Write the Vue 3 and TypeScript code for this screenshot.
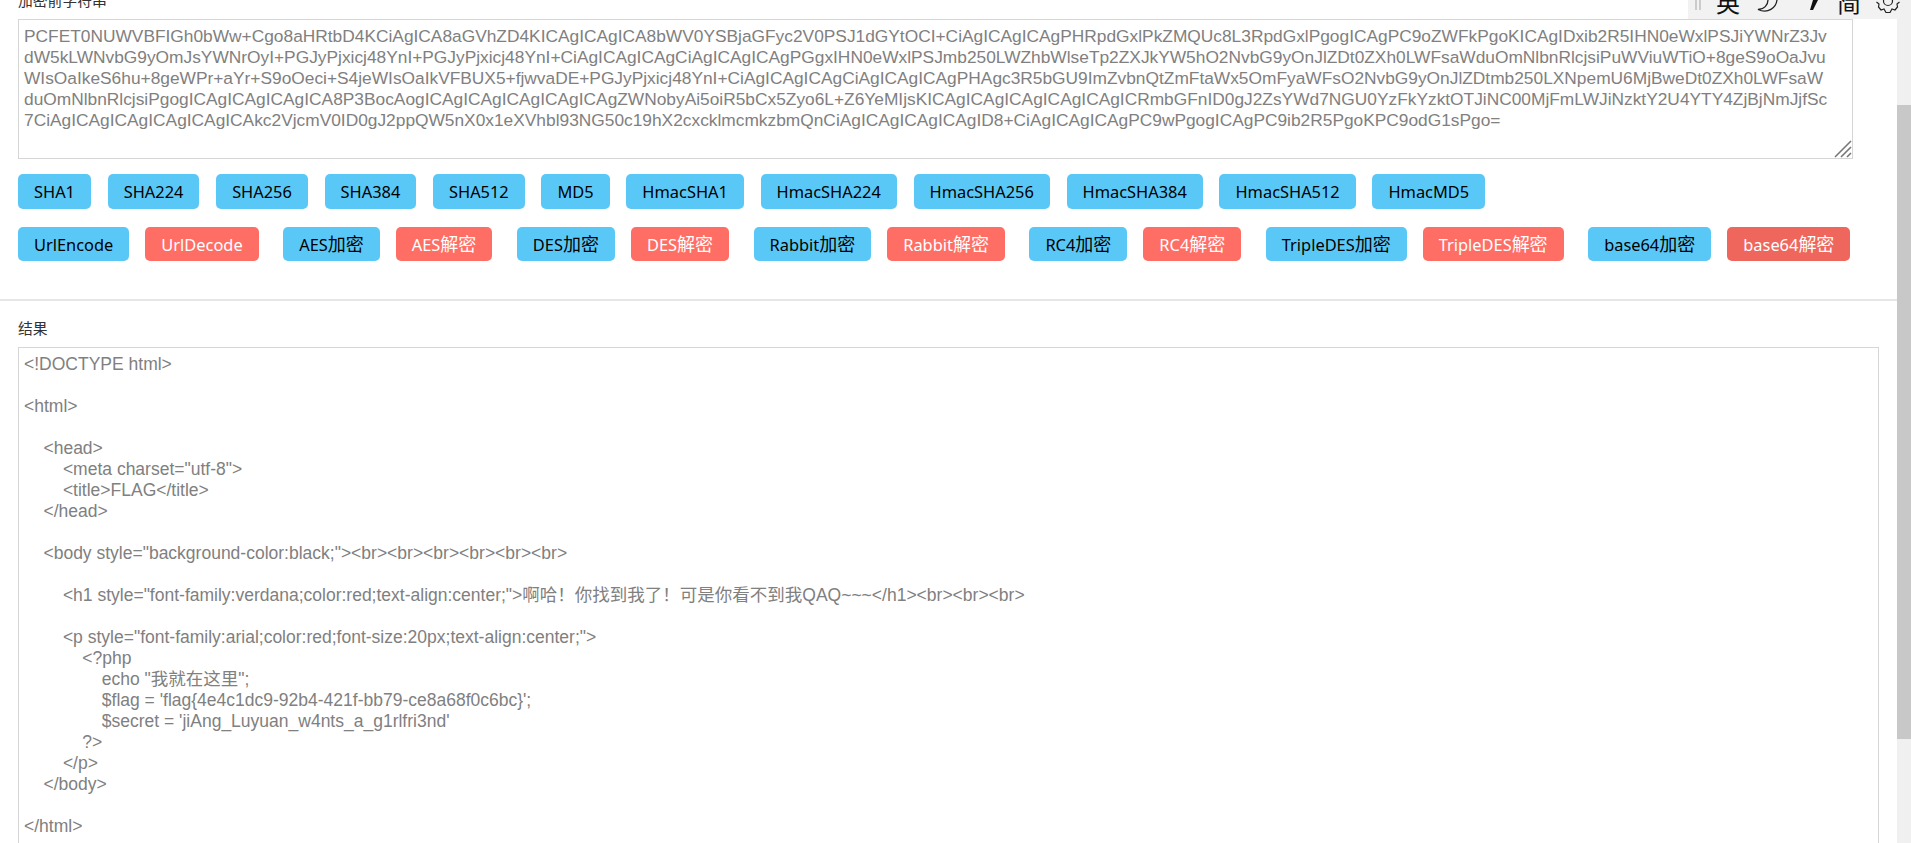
<script setup lang="ts">
type Kind = 'blue' | 'red' | 'dark'
interface Btn { name: string; suffix: string; kind: Kind }
const hashes: string[] = ['SHA1', 'SHA224', 'SHA256', 'SHA384', 'SHA512', 'MD5', 'HmacSHA1', 'HmacSHA224', 'HmacSHA256', 'HmacSHA384', 'HmacSHA512', 'HmacMD5']
const ciphers: string[] = ['AES', 'DES', 'Rabbit', 'RC4', 'TripleDES', 'base64']
const pairs: Btn[][] = [
  [{ name: 'UrlEncode', suffix: '', kind: 'blue' }, { name: 'UrlDecode', suffix: '', kind: 'red' }],
  ...ciphers.map((c): Btn[] => [
    { name: c, suffix: '加密', kind: 'blue' },
    { name: c, suffix: '解密', kind: c === 'base64' ? 'dark' : 'red' },
  ]),
]
const source = `PCFET0NUWVBFIGh0bWw+Cgo8aHRtbD4KCiAgICA8aGVhZD4KICAgICAgICA8bWV0YSBjaGFyc2V0PSJ1dGYtOCI+CiAgICAgICAgPHRpdGxlPkZMQUc8L3RpdGxlPgogICAgPC9oZWFkPgoKICAgIDxib2R5IHN0eWxlPSJiYWNrZ3Jv
dW5kLWNvbG9yOmJsYWNrOyI+PGJyPjxicj48YnI+PGJyPjxicj48YnI+CiAgICAgICAgCiAgICAgICAgPGgxIHN0eWxlPSJmb250LWZhbWlseTp2ZXJkYW5hO2NvbG9yOnJlZDt0ZXh0LWFsaWduOmNlbnRlcjsiPuWViuWTiO+8geS9oOaJvu
WIsOaIkeS6hu+8geWPr+aYr+S9oOeci+S4jeWIsOaIkVFBUX5+fjwvaDE+PGJyPjxicj48YnI+CiAgICAgICAgCiAgICAgICAgPHAgc3R5bGU9ImZvbnQtZmFtaWx5OmFyaWFsO2NvbG9yOnJlZDtmb250LXNpemU6MjBweDt0ZXh0LWFsaW
duOmNlbnRlcjsiPgogICAgICAgICAgICA8P3BocAogICAgICAgICAgICAgICAgZWNobyAi5oiR5bCx5Zyo6L+Z6YeMIjsKICAgICAgICAgICAgICAgICRmbGFnID0gJ2ZsYWd7NGU0YzFkYzktOTJiNC00MjFmLWJiNzktY2U4YTY4ZjBjNmJjfSc
7CiAgICAgICAgICAgICAgICAkc2VjcmV0ID0gJ2ppQW5nX0x1eXVhbl93NG50c19hX2cxcklmcmkzbmQnCiAgICAgICAgICAgID8+CiAgICAgICAgPC9wPgogICAgPC9ib2R5PgoKPC9odG1sPgo=`
const result = `<!DOCTYPE html>

<html>

    <head>
        <meta charset="utf-8">
        <title>FLAG</title>
    </head>

    <body style="background-color:black;"><br><br><br><br><br><br>

        <h1 style="font-family:verdana;color:red;text-align:center;">啊哈！你找到我了！可是你看不到我QAQ~~~</h1><br><br><br>

        <p style="font-family:arial;color:red;font-size:20px;text-align:center;">
            <?php
                echo "我就在这里";
                $flag = 'flag{4e4c1dc9-92b4-421f-bb79-ce8a68f0c6bc}';
                $secret = 'jiAng_Luyuan_w4nts_a_g1rlfri3nd'
            ?>
        </p>
    </body>

</html>
`
</script>

<template>
  <div class="page">
    <main class="content">
      <section class="top">
        <div class="label first">加密前字符串</div>
        <div class="box source">
          <pre class="code">{{ source }}</pre>
          <svg class="grip" viewBox="0 0 18 18" width="18" height="18">
            <path d="M17 1 1 17M17 7 7 17M17 13 13 17" stroke="#777" stroke-width="1.6" fill="none" />
          </svg>
        </div>
        <div class="row hashes">
          <button v-for="h in hashes" :key="h" class="btn blue">{{ h }}</button>
        </div>
        <div class="row pairs">
          <div v-for="(p, i) in pairs" :key="i" class="pair">
            <button v-for="b in p" :key="b.name + b.suffix" class="btn" :class="b.kind">{{ b.name }}<span class="cjk">{{ b.suffix }}</span></button>
          </div>
        </div>
      </section>
      <section class="bottom">
        <div class="label">结果</div>
        <div class="box output">
          <pre class="code">{{ result }}</pre>
        </div>
      </section>
    </main>
    <aside class="scrollbar"><div class="thumb"></div></aside>
    <div class="ime">
      <span class="handle"></span>
      <span class="ime-char first-char">英</span>
      <svg class="moon" viewBox="0 0 24 13" width="24" height="13">
        <path d="M20 0C19 8 11 14 1 9.5 7 9.5 11 5 11 0" fill="none" stroke="#222" stroke-width="1.3" />
      </svg>
      <svg class="comma" viewBox="0 0 10 13" width="10" height="13">
        <path d="M3 0H8L3 10H0Z" fill="#111" />
      </svg>
      <span class="ime-char last-char">简</span>
      <svg class="gear" viewBox="0 0 24 13" width="24" height="13">
        <path d="M.5 2 3 4 2.5 7 5 10 8 9 10 12.5H14L16 9 19 10 21.5 7 21 4 23.5 2" fill="none" stroke="#222" stroke-width="1.2" />
        <circle cx="12" cy="1" r="4.5" fill="none" stroke="#222" stroke-width="1.2" />
      </svg>
    </div>
  </div>
</template>

<style>
html, body { margin: 0; background: #fff; overflow: hidden; }
</style>

<style scoped>
.page {
  position: relative;
  display: flex;
  width: 1911px;
  height: 843px;
  overflow: hidden;
  background: #fff;
  font-family: "Liberation Sans", "Noto Sans CJK SC", sans-serif;
}
.content { flex: 1; min-width: 0; }
.top { padding: 0 18px; height: 307px; border-bottom: 2px solid #e6e6e6; box-sizing: content-box; }
.label { font-size: 14.8px; line-height: 18px; color: #333; }
.label.first { margin-top: -8px; height: 27px; }
.box { position: relative; border: 1.5px solid #d6d6d6; box-sizing: border-box; background: #fff; }
.source { width: 1835px; height: 140px; }
.code {
  margin: 0;
  padding: 6px 5px 0;
  font: 17.33px/21px "Liberation Sans", "Noto Sans CJK SC", sans-serif;
  color: #808080;
  white-space: pre;
  overflow: hidden;
}
.output .code { font-size: 17.5px; }
.grip { position: absolute; right: 0; bottom: 0; }
.row { display: flex; }
.hashes { gap: 16.7px; margin-top: 15px; }
.pairs { gap: 24.5px; margin-top: 18px; }
.pair { display: flex; gap: 16px; }
.btn {
  height: 35px;
  padding: 0 16px;
  border: 0;
  border-radius: 5px;
  font: 16.4px/35px "Noto Sans", "Noto Sans CJK SC", sans-serif;
  white-space: nowrap;
}
.cjk { font-size: 18px; }
.pairs .btn { height: 34px; line-height: 34px; }
.blue { background: #5ac8f7; color: #000; }
.red { background: #ff6e64; color: #fff; }
.dark { background: #ee665c; color: #fff; }
.bottom { padding: 19px 18px 0; }
.output { width: 1861px; height: 520px; margin-top: 9px; }
.scrollbar { flex: 0 0 14px; background: #f0f0f0; }
.thumb { margin-top: 105px; height: 634px; background: #c8c8c8; }
.ime {
  position: absolute;
  left: 1688px;
  top: 0;
  width: 212px;
  height: 19px;
  background: #f2f2f2;
  overflow: hidden;
}
.handle { position: absolute; left: 7px; top: 0; width: 6px; height: 10px; border-left: 2px solid #ccc; border-right: 2px solid #ccc; box-sizing: border-box; }
.ime-char { position: absolute; top: -13px; font: 24px/30px "Noto Sans CJK SC", sans-serif; color: #111; }
.first-char { left: 28px; }
.last-char { left: 149px; }
.moon { position: absolute; left: 69px; top: 0; }
.comma { position: absolute; left: 122px; top: 0; }
.gear { position: absolute; left: 188px; top: 0; }
</style>
